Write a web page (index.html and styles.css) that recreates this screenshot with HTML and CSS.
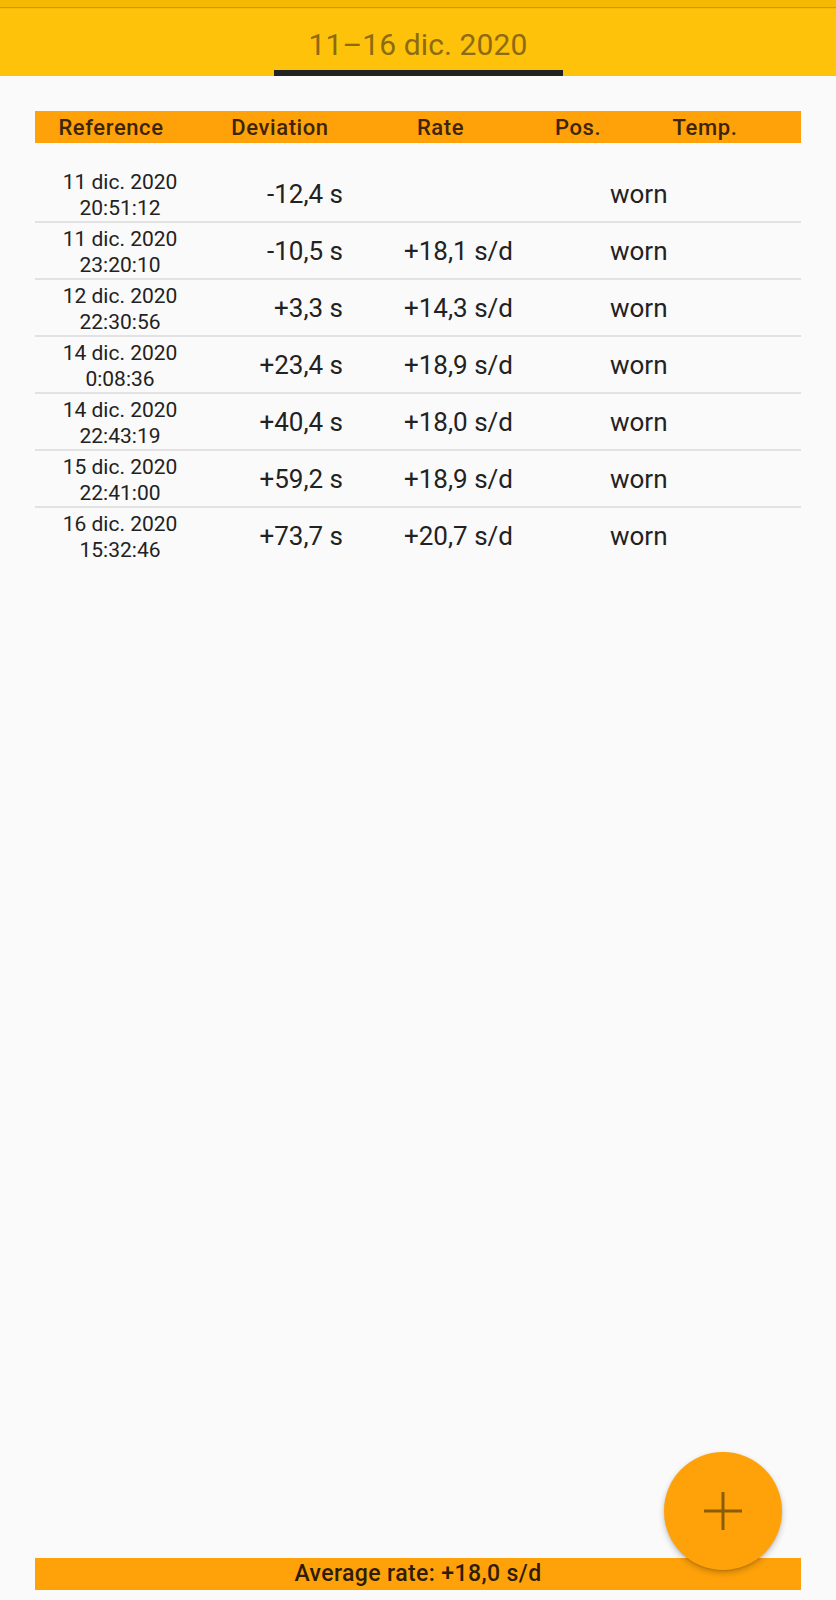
FILE: index.html
```html
<!DOCTYPE html>
<html lang="es">
<head>
<meta charset="utf-8">
<title>11–16 dic. 2020</title>
<link rel="stylesheet" href="styles.css">
</head>
<body>
<div class="page">
  <div class="statusbar"></div>
  <header class="appbar">
    <div class="title">11–16 dic. 2020</div>
    <div class="indicator"></div>
  </header>
  <main class="content">
    <div class="thead">
      <span>Reference</span>
      <span>Deviation</span>
      <span>Rate</span>
      <span>Pos.</span>
      <span>Temp.</span>
    </div>
    <div class="rows">
      <div class="row"><div class="date">11 dic. 2020<br>20:51:12</div><div class="dev">-12,4 s</div><div class="rate"></div><div class="pos">worn</div></div>
      <div class="row"><div class="date">11 dic. 2020<br>23:20:10</div><div class="dev">-10,5 s</div><div class="rate">+18,1 s/d</div><div class="pos">worn</div></div>
      <div class="row"><div class="date">12 dic. 2020<br>22:30:56</div><div class="dev">+3,3 s</div><div class="rate">+14,3 s/d</div><div class="pos">worn</div></div>
      <div class="row"><div class="date">14 dic. 2020<br>0:08:36</div><div class="dev">+23,4 s</div><div class="rate">+18,9 s/d</div><div class="pos">worn</div></div>
      <div class="row"><div class="date">14 dic. 2020<br>22:43:19</div><div class="dev">+40,4 s</div><div class="rate">+18,0 s/d</div><div class="pos">worn</div></div>
      <div class="row"><div class="date">15 dic. 2020<br>22:41:00</div><div class="dev">+59,2 s</div><div class="rate">+18,9 s/d</div><div class="pos">worn</div></div>
      <div class="row"><div class="date">16 dic. 2020<br>15:32:46</div><div class="dev">+73,7 s</div><div class="rate">+20,7 s/d</div><div class="pos">worn</div></div>
    </div>
  </main>
  <footer class="footer">Average rate: +18,0 s/d</footer>
  <button class="fab" aria-label="Add">
    <svg width="40" height="40" viewBox="0 0 40 40"><path d="M20 1 V39 M1 20 H39" stroke="#8a5c06" stroke-width="3" fill="none"/></svg>
  </button>
</div>
</body>
</html>
```
FILE: styles.css
```css
* { box-sizing: border-box; }
html, body { margin: 0; padding: 0; }
body {
  background: #fafafa;
  font-family: Roboto, "Liberation Sans", sans-serif;
  color: #222;
}
.page {
  position: relative;
  width: 836px;
  height: 1600px;
  display: flex;
  flex-direction: column;
  overflow: hidden;
}
.statusbar {
  height: 7px;
  background: #f5b904;
  box-shadow: 0 1px 1px rgba(120, 80, 0, 0.35);
  position: relative;
  z-index: 1;
}
.appbar {
  height: 69px;
  background: #ffc20a;
  display: flex;
  flex-direction: column;
  align-items: center;
  justify-content: flex-end;
}
.title {
  font-size: 30px;
  line-height: 36px;
  color: #8d6a14;
  letter-spacing: 0.1px;
  margin-bottom: 7px;
}
.indicator {
  width: 289px;
  height: 6px;
  background: #222;
}
.content {
  flex: 1;
  padding: 35px 35px 0 35px;
}
.thead {
  height: 32px;
  background: #ffa20a;
  display: grid;
  grid-template-columns: 152px 186px 135px 140px 114px;
  justify-items: center;
  align-items: center;
  font-size: 22px;
  font-weight: 500;
  color: #3e2408;
  letter-spacing: 0.6px;
}
.rows {
  margin-top: 23px;
}
.row {
  height: 57px;
  display: grid;
  grid-template-columns: 170px 138px 267px 1fr;
  align-items: center;
  border-bottom: 2px solid #e2e2e2;
  padding-bottom: 1px;
}
.row:last-child { border-bottom-color: transparent; }
.date {
  text-align: center;
  font-size: 21px;
  line-height: 26px;
  padding-top: 3px;
  color: #222;
}
.dev {
  text-align: right;
  font-size: 26px;
  color: #222;
}
.rate {
  padding-left: 61px;
  font-size: 26px;
  color: #222;
}
.pos {
  font-size: 26px;
  color: #222;
}
.footer {
  margin: 0 35px 10px 35px;
  height: 32px;
  background: #ffa20a;
  text-align: center;
  font-size: 23px;
  line-height: 32px;
  font-weight: 500;
  color: #2e1c06;
  letter-spacing: 0.4px;
}
.fab {
  position: absolute;
  right: 54px;
  bottom: 30px;
  width: 118px;
  height: 118px;
  border-radius: 50%;
  border: none;
  padding: 0;
  background: #ffa20a;
  box-shadow: 0 3px 6px rgba(0, 0, 0, 0.22), 0 1px 2px rgba(0, 0, 0, 0.12);
  display: flex;
  align-items: center;
  justify-content: center;
}
```
